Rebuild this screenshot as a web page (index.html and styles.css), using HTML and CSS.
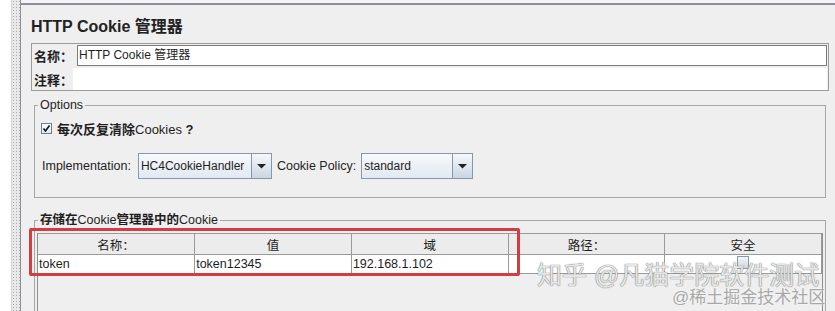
FILE: index.html
```html
<!DOCTYPE html>
<html lang="zh-CN">
<head>
    <meta charset="UTF-8">
    <title>HTTP Cookie 管理器</title>
    <link rel="stylesheet" href="styles.css">
</head>
<body>
    <div class="app">
        <div class="tree"></div>
        <div class="splitter"></div>
        <div class="panel">
            <div class="editor">
                <h1 class="title">HTTP Cookie 管理器</h1>

                <div class="name-box">
                    <div class="field-row name-row">
                        <label class="lbl">名称：</label>
                        <div class="name-input">HTTP Cookie 管理器</div>
                    </div>
                    <div class="field-row comment-row">
                        <label class="lbl">注释：</label>
                        <div class="comment-input"></div>
                    </div>
                </div>

                <fieldset class="group options">
                    <legend>Options</legend>
                    <div class="check-row">
                        <span class="checkbox">
                            <svg width="9" height="9" viewBox="0 0 9 9"><path d="M1.5 4.5 L3.5 7 L7.5 1.5" fill="none" stroke="#111" stroke-width="1.6"/></svg>
                        </span>
                        <span class="check-label"><b>每次反复清除</b>Cookies <b>?</b></span>
                    </div>
                    <div class="combo-row">
                        <span class="combo-label">Implementation:</span>
                        <div class="combo impl-combo">
                            <span class="combo-text">HC4CookieHandler</span>
                            <span class="combo-btn"><svg width="9" height="5" viewBox="0 0 9 5"><polygon points="0,0 9,0 4.5,4.5" fill="#222"/></svg></span>
                        </div>
                        <span class="combo-label policy-label">Cookie Policy:</span>
                        <div class="combo policy-combo">
                            <span class="combo-text">standard</span>
                            <span class="combo-btn"><svg width="9" height="5" viewBox="0 0 9 5"><polygon points="0,0 9,0 4.5,4.5" fill="#222"/></svg></span>
                        </div>
                    </div>
                </fieldset>

                <fieldset class="group stored">
                    <legend><b>存储在</b>Cookie<b>管理器中的</b>Cookie</legend>
                    <div class="table-pane">
                        <table class="cookies">
                            <thead>
                                <tr>
                                    <th>名称：</th>
                                    <th>值</th>
                                    <th>域</th>
                                    <th>路径：</th>
                                    <th>安全</th>
                                </tr>
                            </thead>
                            <tbody>
                                <tr>
                                    <td>token</td>
                                    <td>token12345</td>
                                    <td>192.168.1.102</td>
                                    <td></td>
                                    <td class="secure"><span class="mini-check"></span></td>
                                </tr>
                            </tbody>
                        </table>
                    </div>
                </fieldset>
            </div>
        </div>

        <div class="annotation"></div>
        <div class="watermark">知乎 @凡猫学院软件测试</div>
        <div class="watermark-small">@稀土掘金技术社区</div>
    </div>
</body>
</html>
```

FILE: styles.css
```css
* {
    box-sizing: border-box;
}
body {
    margin: 0;
    width: 835px;
    height: 311px;
    overflow: hidden;
    font-family: "Liberation Sans", "Noto Sans CJK SC", sans-serif;
    color: #1e1e1e;
    background-color: #efefef;
}
.app {
    position: relative;
    display: flex;
    height: 311px;
    overflow: hidden;
}
.tree {
    width: 12px;
    background-color: #fff;
    border-right: 1px solid #d4d4d4;
}
.splitter {
    width: 8px;
    background-color: #e9e9e9;
    background-image: radial-gradient(circle, #a9a9a9 0.7px, transparent 0.9px);
    background-size: 3px 3px;
}
.panel {
    flex: 1;
    border-left: 1px solid #8d8d9b;
    padding-top: 3px;
    background-color: #f5f5f7;
}
.editor {
    height: 100%;
    border-top: 2px solid #8e8ea2;
    background-color: #efefef;
    padding: 0 6px 0 10px;
}
.title {
    margin: 0 0 6px;
    padding-top: 11px;
    font-size: 16px;
    line-height: 21px;
    font-weight: bold;
    color: #222;
}

/* name / comment box */
.name-box {
    border: 1px solid #9c9c9c;
    padding: 1px 1px 0;
}
.field-row {
    display: flex;
    align-items: center;
    font-size: 13px;
    font-weight: bold;
}
.field-row .lbl {
    flex-shrink: 0;
    width: 44px;
    padding-left: 1px;
    white-space: nowrap;
}
.name-row {
    height: 21px;
}
.name-input {
    flex: 1;
    height: 21px;
    background-color: #fff;
    border: 1px solid #7c7c7c;
    font-weight: normal;
    font-size: 12px;
    line-height: 19px;
    padding-left: 1px;
}
.comment-row {
    height: 22px;
    margin-top: 2px;
}
.comment-row .lbl {
    width: 40px;
}
.comment-input {
    flex: 1;
    align-self: stretch;
    background-color: #fff;
}

/* titled groups */
.group {
    margin: 0 3px;
    padding: 0 3px;
    border: 1px solid #a6a6a6;
    min-width: 0;
}
.group legend {
    padding: 0 2px;
    font-size: 12.5px;
    line-height: 14px;
}
.options {
    margin-top: 7px;
    padding-bottom: 18px;
}
.check-row {
    display: flex;
    align-items: center;
    height: 16px;
    margin-top: 8px;
    padding-left: 3px;
    font-size: 13px;
}
.checkbox {
    display: flex;
    align-items: center;
    justify-content: center;
    width: 11px;
    height: 11px;
    border: 1px solid #6f7f90;
    background: linear-gradient(#fff, #dfe6ee);
    margin-right: 5px;
}
.combo-row {
    display: flex;
    align-items: center;
    height: 26px;
    margin-top: 17px;
    padding-left: 4px;
    font-size: 12.5px;
}
.policy-label {
    margin-left: 5px;
}
.combo {
    display: flex;
    height: 26px;
    border: 1px solid #8597ac;
    background: linear-gradient(#f7f9fc, #e2e9f1);
    font-size: 12px;
}
.impl-combo {
    width: 134px;
    margin-left: 7px;
}
.policy-combo {
    width: 112px;
    margin-left: 5px;
}
.combo-text {
    flex: 1;
    padding-left: 2px;
    line-height: 24px;
}
.combo-btn {
    display: flex;
    align-items: center;
    justify-content: center;
    width: 20px;
    border-left: 1px solid #8597ac;
    background: linear-gradient(#f5f8fb, #cbd6e2);
}

/* cookie table */
.stored {
    margin-top: 15px;
    padding: 0 2px;
}
.stored legend {
    margin-left: 1px;
}
.table-pane {
    margin-top: 6px;
    height: 100px;
    border-left: 1px solid #8f8f8f;
    border-right: 1px solid #8f8f8f;
}
.cookies {
    width: 100%;
    border-collapse: collapse;
    table-layout: fixed;
    font-size: 12.5px;
}
.cookies th {
    height: 21px;
    padding: 0;
    font-weight: normal;
    background-color: #ececec;
    border: 1px solid #9a9a9a;
    border-left: 0;
}
.cookies td {
    height: 16px;
    padding: 0 1px;
    line-height: 15px;
    background-color: #fff;
    border-right: 1px solid #9a9a9a;
    border-bottom: 1px solid #9a9a9a;
    white-space: nowrap;
    overflow: hidden;
}
.cookies td.secure {
    text-align: center;
    vertical-align: top;
}
.mini-check {
    display: inline-block;
    width: 12px;
    height: 13px;
    margin-top: 1px;
    border: 1px solid #8a96a3;
    background: linear-gradient(#f4f6f8, #cfd6de);
}

/* overlays from the screenshot */
.annotation {
    position: absolute;
    left: 29px;
    top: 228px;
    width: 491px;
    height: 48px;
    border: 3px solid #d33c42;
    border-radius: 2px;
}
.watermark {
    position: absolute;
    left: 537px;
    top: 263px;
    font-size: 25px;
    line-height: 24px;
    color: #e6e6e6;
    text-shadow: 0 0 1px #7a7a7a, 0 0 1px #7a7a7a;
    white-space: nowrap;
}
.watermark-small {
    position: absolute;
    left: 672px;
    top: 290px;
    font-size: 17px;
    line-height: 16px;
    color: #a8a8a8;
    text-shadow: 0 0 2px #fff;
    white-space: nowrap;
}
```
